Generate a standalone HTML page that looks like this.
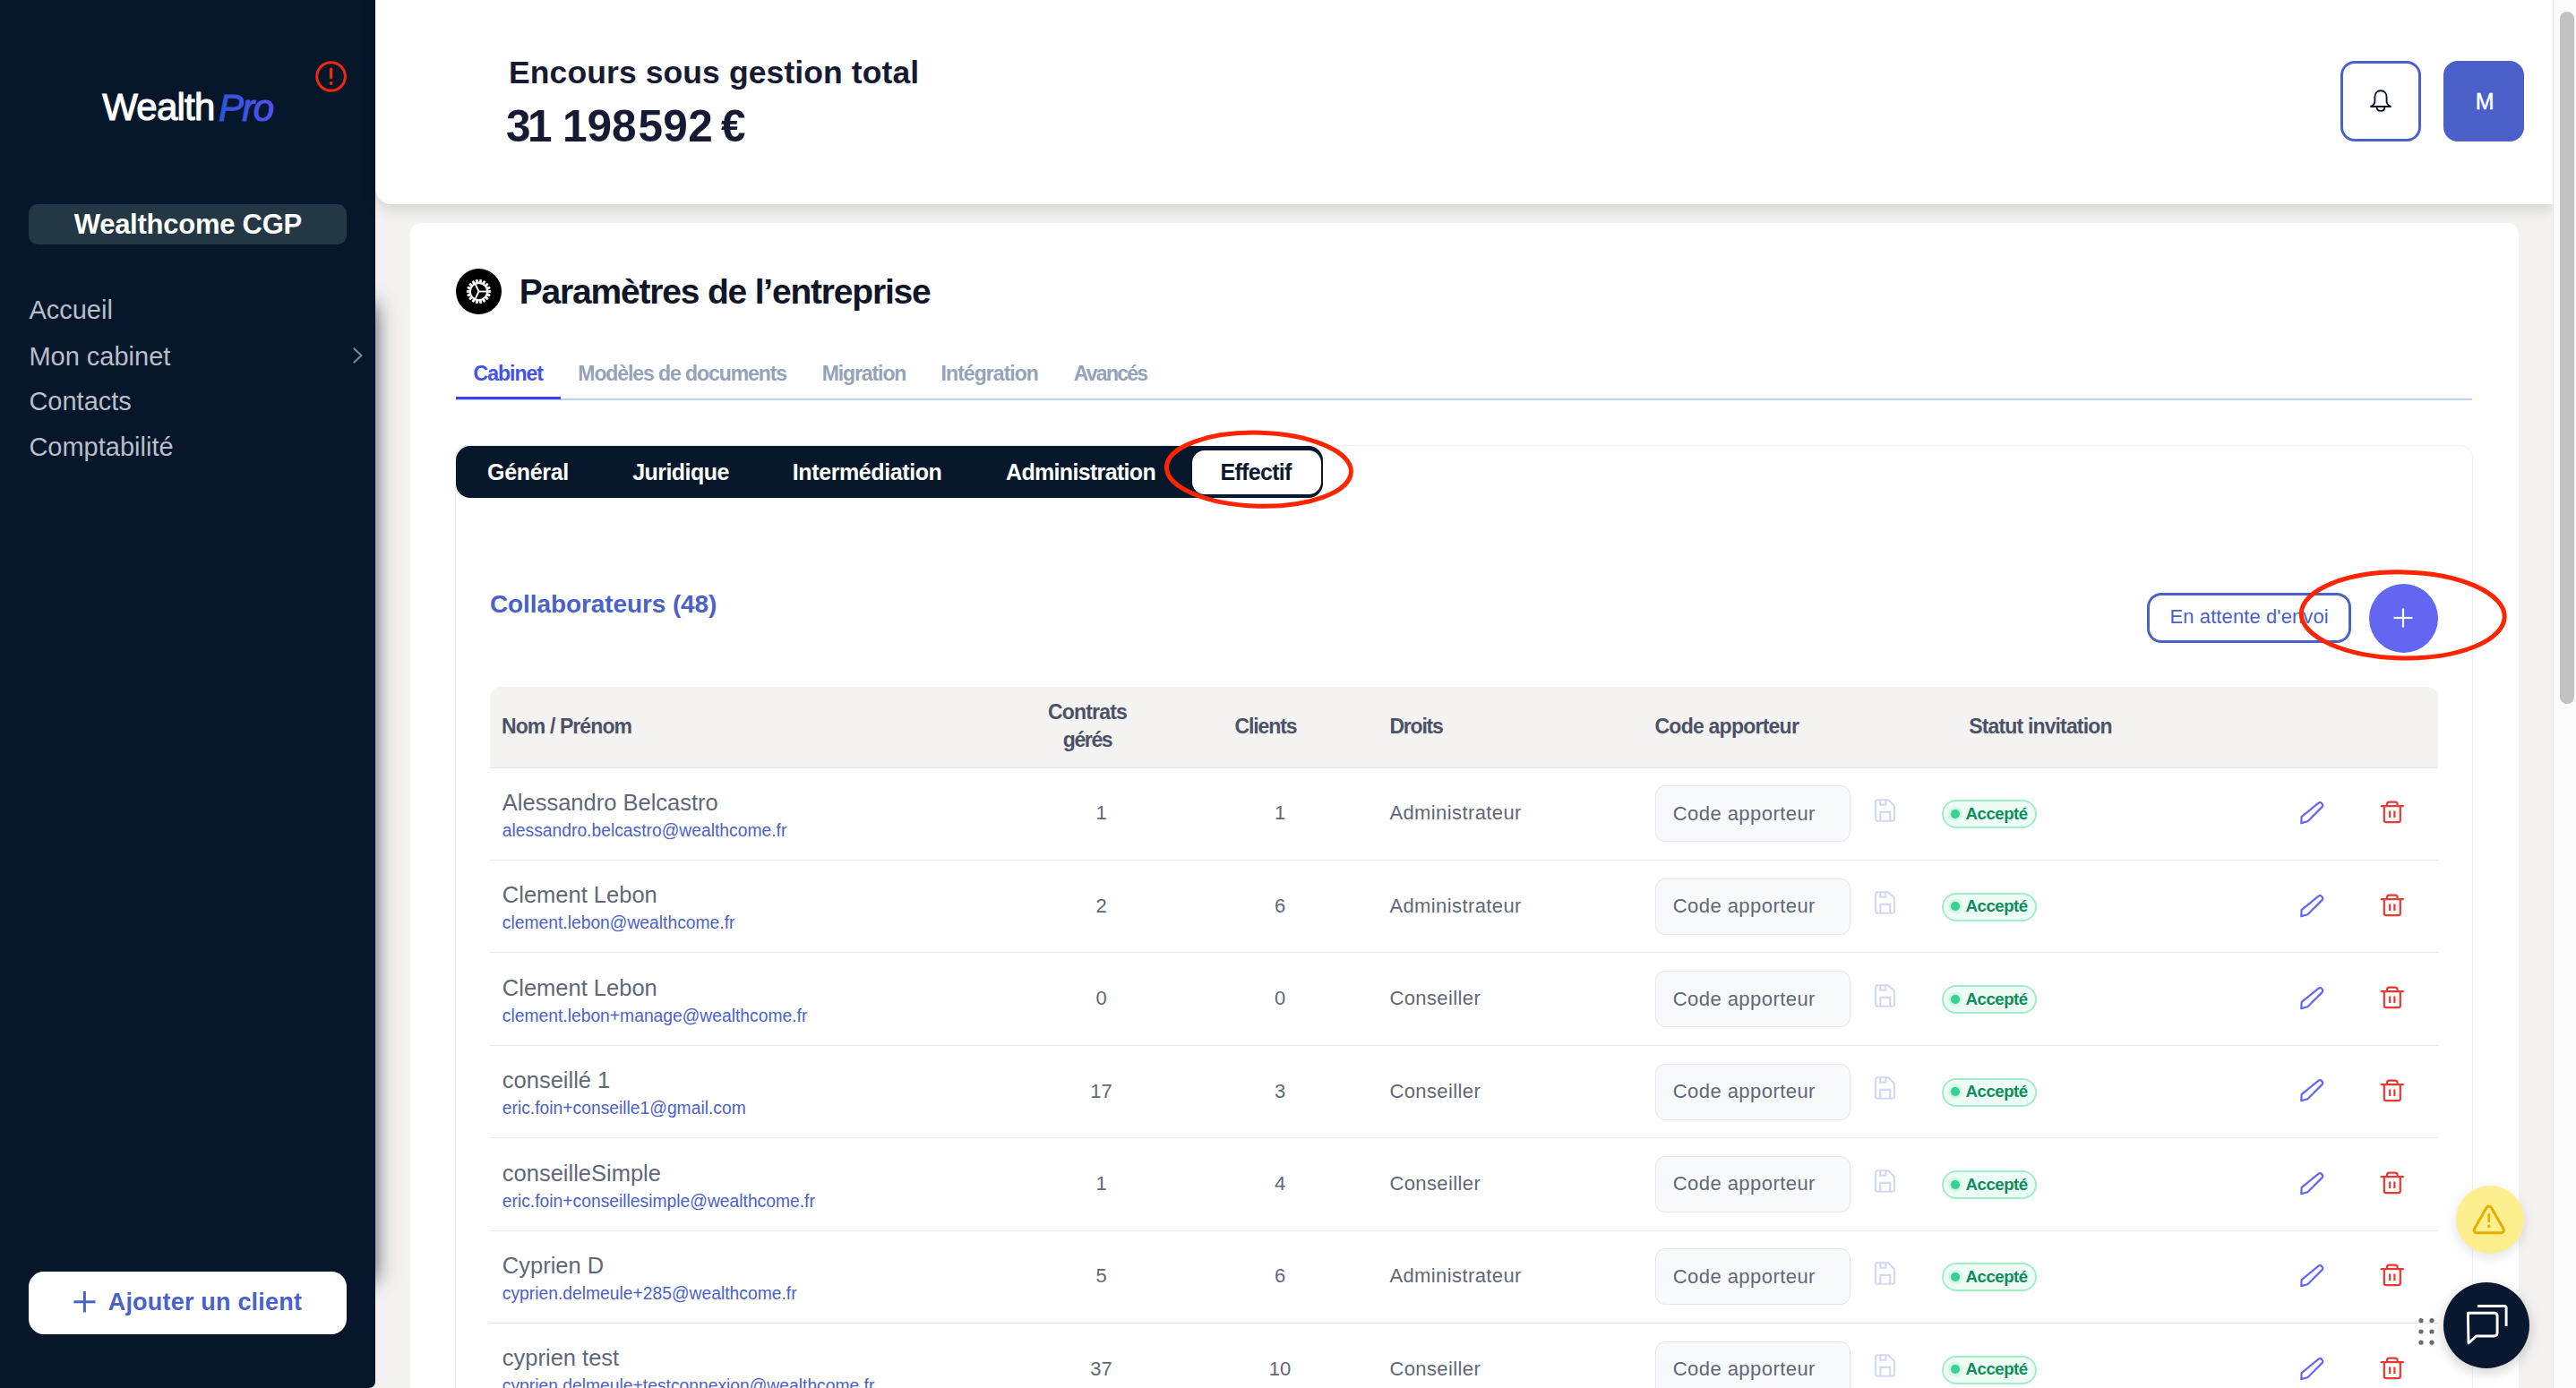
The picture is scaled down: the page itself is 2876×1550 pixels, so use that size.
<!DOCTYPE html>
<html><head><meta charset="utf-8"><title>WealthPro</title>
<style>
html,body{margin:0;padding:0;}
body{width:2876px;height:1550px;overflow:hidden;position:relative;background:#f3f2f0;font-family:"Liberation Sans",sans-serif;}
.t{position:absolute;line-height:1;white-space:nowrap;}
.r{position:absolute;}
</style></head><body>
<div class="r" style="left:0px;top:340px;width:419px;height:1090px;background:#06172b;box-shadow:0 0 22px rgba(6,23,43,0.72);z-index:2;"></div>
<div class="r" style="left:0px;top:0px;width:419px;height:1550px;background:#06172b;border-bottom-right-radius:7px;z-index:3;"></div>
<div class="t" style="left:114.2px;top:99.4px;font-size:42px;font-weight:400;color:#ffffff;letter-spacing:-0.75px;z-index:4;-webkit-text-stroke:1.1px #fff;">Wealth</div>
<svg class="r" style="left:236px;top:95px;z-index:4" width="90" height="50" viewBox="0 0 90 50"><defs><linearGradient id="pg" x1="0" x2="1" y1="0" y2="0"><stop offset="0" stop-color="#2a56d8"/><stop offset="1" stop-color="#5352f2"/></linearGradient></defs><text x="7.9" y="40" font-family="Liberation Sans" font-size="42" font-style="italic" letter-spacing="-1.6" fill="url(#pg)" stroke="url(#pg)" stroke-width="1.0">Pro</text></svg>
<svg class="r" style="left:350px;top:66px;z-index:4" width="40" height="40" viewBox="0 0 40 40"><circle cx="19.6" cy="19.5" r="15.8" fill="none" stroke="#f0290c" stroke-width="3"/><line x1="19.6" y1="11.3" x2="19.6" y2="20.8" stroke="#f0290c" stroke-width="3.4" stroke-linecap="round"/><circle cx="19.6" cy="27.0" r="2.0" fill="#f0290c"/></svg>
<div class="r" style="left:32px;top:228px;width:355px;height:45px;background:#233745;border-radius:10px;z-index:4;"></div>
<div class="t" style="left:82.7px;top:234.8px;font-size:31px;font-weight:700;color:#ffffff;letter-spacing:-0.25px;z-index:5;">Wealthcome CGP</div>
<div class="t" style="left:32.4px;top:331.6px;font-size:29px;font-weight:400;color:#b8bec8;z-index:4;">Accueil</div>
<div class="t" style="left:32.4px;top:383.6px;font-size:29px;font-weight:400;color:#b8bec8;z-index:4;">Mon cabinet</div>
<div class="t" style="left:32.4px;top:434.1px;font-size:29px;font-weight:400;color:#b8bec8;z-index:4;">Contacts</div>
<div class="t" style="left:32.4px;top:485.2px;font-size:29px;font-weight:400;color:#b8bec8;z-index:4;">Comptabilité</div>
<svg class="r" style="left:390px;top:386px;z-index:4" width="20" height="22" viewBox="0 0 20 22"><polyline points="5.5,3.5 13.5,11 5.5,18.5" fill="none" stroke="#7c8594" stroke-width="2.2" stroke-linecap="round" stroke-linejoin="round"/></svg>
<div class="r" style="left:32px;top:1420px;width:355px;height:70px;background:#ffffff;border-radius:17px;z-index:4;"></div>
<svg class="r" style="left:80px;top:1440px;z-index:5" width="28" height="28" viewBox="0 0 28 28"><line x1="14.4" y1="2" x2="14.4" y2="25.5" stroke="#4a62c8" stroke-width="3"/><line x1="2.4" y1="13.8" x2="26.5" y2="13.8" stroke="#4a62c8" stroke-width="3"/></svg>
<div class="t" style="left:120.7px;top:1440.6px;font-size:27px;font-weight:700;color:#4a62c8;letter-spacing:0.2px;z-index:5;">Ajouter un client</div>
<div class="r" style="left:419px;top:-20px;width:2431px;height:248px;background:#ffffff;border-bottom-left-radius:18px;box-shadow:0 6px 16px rgba(0,0,0,0.13);z-index:8;"></div>
<div class="t" style="left:568.0px;top:63.5px;font-size:35.5px;font-weight:700;color:#161b33;letter-spacing:0.1px;z-index:9;">Encours sous gestion total</div>
<div class="t" style="left:565.0px;top:116.1px;font-size:49.5px;font-weight:700;color:#161b33;letter-spacing:-3.5px;z-index:9;">31</div>
<div class="t" style="left:628.0px;top:116.1px;font-size:49.5px;font-weight:700;color:#161b33;z-index:9;">198</div>
<div class="t" style="left:712.5px;top:116.1px;font-size:49.5px;font-weight:700;color:#161b33;letter-spacing:0.3px;z-index:9;">592</div>
<div class="t" style="left:805.0px;top:116.1px;font-size:49.5px;font-weight:700;color:#161b33;z-index:9;">€</div>
<div class="r" style="left:2613px;top:68px;width:90px;height:90px;border:3px solid #4a62c8;border-radius:16px;box-sizing:border-box;background:#fff;z-index:9;"></div>
<svg class="r" style="left:2644px;top:98px;z-index:10" width="28" height="30" viewBox="0 0 28 30"><path d="M14 3.2c-4.2 0-6.6 3.2-6.6 7.2v5c0 2.2-1.4 3.8-4.4 5.6h22c-3-1.8-4.4-3.4-4.4-5.6v-5c0-4-2.4-7.2-6.6-7.2z" fill="none" stroke="#0b1626" stroke-width="1.9" stroke-linejoin="round"/><path d="M9.6 21.2c0 2.9 1.9 4.7 4.4 4.7s4.4-1.8 4.4-4.7" fill="none" stroke="#0b1626" stroke-width="1.9"/></svg>
<div class="r" style="left:2728px;top:68px;width:90px;height:90px;background:#4a60c8;border-radius:16px;z-index:9;"></div>
<div class="t" style="left:2763.8px;top:100.9px;font-size:25px;font-weight:400;color:#ffffff;z-index:10;-webkit-text-stroke:0.5px #fff;">M</div>
<div class="r" style="left:2850px;top:0px;width:26px;height:1550px;background:#fafafa;border-left:1px solid #e4e4e4;box-sizing:border-box;z-index:12;"></div>
<div class="r" style="left:2858px;top:13px;width:16px;height:773px;background:#c1c1c1;border-radius:8px;z-index:13;"></div>
<div class="r" style="left:458px;top:249px;width:2354px;height:1351px;background:#ffffff;border-radius:12px;z-index:1;"></div>
<svg class="r" style="left:509px;top:300px;z-index:2" width="51" height="51" viewBox="0 0 51 51"><circle cx="25.5" cy="25.5" r="25.5" fill="#000"/><g id="gear"></g><path d="M35.71,24.16 L38.76,24.48 L38.76,26.52 L35.71,26.84 L35.56,27.73 L38.31,29.08 L37.61,30.99 L34.64,30.26 L34.19,31.03 L36.31,33.24 L35.00,34.81 L32.46,33.09 L31.77,33.67 L33.01,36.47 L31.25,37.49 L29.44,35.02 L28.60,35.32 L28.81,38.38 L26.80,38.74 L25.95,35.79 L25.05,35.79 L24.20,38.74 L22.19,38.38 L22.40,35.32 L21.56,35.02 L19.75,37.49 L17.99,36.47 L19.23,33.67 L18.54,33.09 L16.00,34.81 L14.69,33.24 L16.81,31.03 L16.36,30.26 L13.39,30.99 L12.69,29.08 L15.44,27.73 L15.29,26.84 L12.24,26.52 L12.24,24.48 L15.29,24.16 L15.44,23.27 L12.69,21.92 L13.39,20.01 L16.36,20.74 L16.81,19.97 L14.69,17.76 L16.00,16.19 L18.54,17.91 L19.23,17.33 L17.99,14.53 L19.75,13.51 L21.56,15.98 L22.40,15.68 L22.19,12.62 L24.20,12.26 L25.05,15.21 L25.95,15.21 L26.80,12.26 L28.81,12.62 L28.60,15.68 L29.44,15.98 L31.25,13.51 L33.01,14.53 L31.77,17.33 L32.46,17.91 L35.00,16.19 L36.31,17.76 L34.19,19.97 L34.64,20.74 L37.61,20.01 L38.31,21.92 L35.56,23.27Z" fill="#fff" stroke="#fff" stroke-width="0.6" stroke-linejoin="round"/><circle cx="25.5" cy="25.5" r="8.6" fill="#000"/><line x1="25.5" y1="25.5" x2="34.50" y2="25.50" stroke="#fff" stroke-width="1.9"/><line x1="25.5" y1="25.5" x2="21.70" y2="33.66" stroke="#fff" stroke-width="1.9"/><line x1="25.5" y1="25.5" x2="21.70" y2="17.34" stroke="#fff" stroke-width="1.9"/></svg>
<div class="t" style="left:579.8px;top:305.5px;font-size:39px;font-weight:700;color:#0f1628;letter-spacing:-1.2px;z-index:2;">Paramètres de l’entreprise</div>
<div class="t" style="left:528.6px;top:405.5px;font-size:23px;font-weight:700;color:#4353e8;letter-spacing:-1.0px;z-index:2;">Cabinet</div>
<div class="t" style="left:645.3px;top:405.5px;font-size:23px;font-weight:700;color:#94a3b8;letter-spacing:-1.08px;z-index:2;">Modèles de documents</div>
<div class="t" style="left:917.7px;top:405.5px;font-size:23px;font-weight:700;color:#94a3b8;letter-spacing:-1.1px;z-index:2;">Migration</div>
<div class="t" style="left:1050.6px;top:405.5px;font-size:23px;font-weight:700;color:#94a3b8;letter-spacing:-0.95px;z-index:2;">Intégration</div>
<div class="t" style="left:1198.8px;top:405.5px;font-size:23px;font-weight:700;color:#94a3b8;letter-spacing:-1.75px;z-index:2;">Avancés</div>
<div class="r" style="left:509px;top:445px;width:2251px;height:2px;background:#bad2fa;z-index:2;"></div>
<div class="r" style="left:509px;top:443px;width:117px;height:3px;background:#3c42f0;z-index:3;"></div>
<div class="r" style="left:508px;top:497px;width:2253px;height:1103px;border:1px solid #efefef;border-radius:14px;box-sizing:border-box;z-index:2;"></div>
<div class="r" style="left:509px;top:498px;width:968px;height:58px;background:#07182c;border-radius:16px;z-index:3;"></div>
<div class="t" style="left:544.0px;top:514.8px;font-size:25px;font-weight:700;color:#ffffff;letter-spacing:-0.3px;z-index:4;">Général</div>
<div class="t" style="left:706.2px;top:514.8px;font-size:25px;font-weight:700;color:#ffffff;letter-spacing:-0.55px;z-index:4;">Juridique</div>
<div class="t" style="left:884.8px;top:514.8px;font-size:25px;font-weight:700;color:#ffffff;letter-spacing:-0.4px;z-index:4;">Intermédiation</div>
<div class="t" style="left:1123.0px;top:514.8px;font-size:25px;font-weight:700;color:#ffffff;letter-spacing:-0.67px;z-index:4;">Administration</div>
<div class="r" style="left:1328.6px;top:501px;width:148.4000000000001px;height:53px;background:#fff;border:2px solid #07182c;border-radius:16px;box-sizing:border-box;z-index:4;"></div>
<div class="t" style="left:1362.5px;top:514.8px;font-size:25px;font-weight:700;color:#0b1a2e;letter-spacing:-0.7px;z-index:5;">Effectif</div>
<div class="t" style="left:547.0px;top:661.1px;font-size:28px;font-weight:700;color:#4a62c8;letter-spacing:-0.1px;z-index:3;">Collaborateurs (48)</div>
<div class="r" style="left:2396.7px;top:661.6px;width:228.5px;height:56.39999999999998px;border:3px solid #4a62c8;border-radius:16px;box-sizing:border-box;z-index:3;"></div>
<div class="t" style="left:2422.5px;top:678.4px;font-size:22px;font-weight:400;color:#4a62c8;letter-spacing:0.1px;z-index:4;">En attente d&#39;envoi</div>
<div class="r" style="left:2645px;top:652px;width:77px;height:77px;background:#6366f1;border-radius:50%;z-index:3;"></div>
<svg class="r" style="left:2669px;top:676px;z-index:4" width="28" height="28" viewBox="0 0 28 28"><line x1="14" y1="3.5" x2="14" y2="24.5" stroke="#fff" stroke-width="2.2"/><line x1="3.5" y1="14" x2="24.5" y2="14" stroke="#fff" stroke-width="2.2"/></svg>
<div class="r" style="left:547px;top:767px;width:2175px;height:91px;background:#f4f3f2;border-top-left-radius:12px;border-top-right-radius:12px;border-bottom:1px solid #e3e5e9;box-sizing:border-box;z-index:3;"></div>
<div class="t" style="left:560.0px;top:799.5px;font-size:23px;font-weight:700;color:#4b5268;letter-spacing:-0.9px;z-index:4;">Nom / Prénom</div>
<div class="t" style="left:1214.0px;top:783.5px;font-size:23px;font-weight:700;color:#4b5268;transform:translateX(-50%);letter-spacing:-0.8px;z-index:4;">Contrats</div>
<div class="t" style="left:1214.0px;top:814.9px;font-size:23px;font-weight:700;color:#4b5268;transform:translateX(-50%);letter-spacing:-1.4px;z-index:4;">gérés</div>
<div class="t" style="left:1378.5px;top:799.9px;font-size:23px;font-weight:700;color:#4b5268;letter-spacing:-1.1px;z-index:4;">Clients</div>
<div class="t" style="left:1551.4px;top:799.9px;font-size:23px;font-weight:700;color:#4b5268;letter-spacing:-1.2px;z-index:4;">Droits</div>
<div class="t" style="left:1847.5px;top:799.9px;font-size:23px;font-weight:700;color:#4b5268;letter-spacing:-0.76px;z-index:4;">Code apporteur</div>
<div class="t" style="left:2198.3px;top:799.9px;font-size:23px;font-weight:700;color:#4b5268;letter-spacing:-0.85px;z-index:4;">Statut invitation</div>
<div class="t" style="left:560.8px;top:884.0px;font-size:25.5px;font-weight:400;color:#5f6877;z-index:4;">Alessandro Belcastro</div>
<div class="t" style="left:560.8px;top:917.9px;font-size:19.3px;font-weight:400;color:#4a62c8;z-index:4;">alessandro.belcastro@wealthcome.fr</div>
<div class="t" style="left:1229.6px;top:897.4px;font-size:22px;font-weight:400;color:#5f6877;transform:translateX(-50%);z-index:4;">1</div>
<div class="t" style="left:1429.0px;top:897.4px;font-size:22px;font-weight:400;color:#5f6877;transform:translateX(-50%);z-index:4;">1</div>
<div class="t" style="left:1551.4px;top:897.4px;font-size:22px;font-weight:400;color:#5f6877;letter-spacing:0.4px;z-index:4;">Administrateur</div>
<div class="r" style="left:1847.5px;top:877.3px;width:218.0px;height:63.10000000000002px;background:#f8f9fb;border:1px solid #e3e5ea;border-radius:11px;box-sizing:border-box;z-index:4;"></div>
<div class="t" style="left:1867.7px;top:897.8px;font-size:22px;font-weight:400;color:#5f6877;letter-spacing:0.45px;z-index:5;">Code apporteur</div>
<svg class="r" style="left:2091px;top:890.0px;z-index:4" width="28" height="30" viewBox="0 0 28 30"><path d="M5 3.3h12.2l6.8 6.8v14.6a2 2 0 0 1-2 2H5a2 2 0 0 1-2-2V5.3a2 2 0 0 1 2-2z" fill="none" stroke="#d3d7f3" stroke-width="2.1" stroke-linejoin="round"/><path d="M8.3 3.5v5.3h6v-5.3" fill="none" stroke="#d3d7f3" stroke-width="2.1"/><path d="M8.3 26.5v-9.6h10.9v9.6" fill="none" stroke="#d3d7f3" stroke-width="2.1"/></svg>
<div class="r" style="left:2168.3px;top:893.3px;width:106.09999999999991px;height:32.0px;background:#edfcf4;border:2px solid #a0eec6;border-radius:16px;box-sizing:border-box;z-index:4;"></div>
<div class="r" style="left:2177.5px;top:904.0px;width:10.0px;height:10.0px;background:#3acf93;border-radius:50%;box-shadow:0 0 4px 1px rgba(58,207,147,.45);z-index:5;"></div>
<div class="t" style="left:2194.5px;top:900.0px;font-size:18.7px;font-weight:700;color:#0f8d5c;letter-spacing:-0.5px;z-index:5;">Accepté</div>
<svg class="r" style="left:2566px;top:893.2px;z-index:4" width="30" height="30" viewBox="0 0 30 30"><path d="M22.3 3.9a3 3 0 0 1 4.2 4.2L10.4 24.2 3.3 26.1l0.3-6.9z" fill="none" stroke="#6366f1" stroke-width="2.2" stroke-linejoin="round"/></svg>
<svg class="r" style="left:2656px;top:893.3px;z-index:4" width="30" height="30" viewBox="0 0 30 30"><path d="M2.6 7.2h24.3" stroke="#e53935" stroke-width="2.2" stroke-linecap="round"/><path d="M9 6.8V5.2a2.6 2.6 0 0 1 2.6-2.6h6.4a2.6 2.6 0 0 1 2.6 2.6v1.6" fill="none" stroke="#e53935" stroke-width="2.2"/><path d="M5.8 7.4v15.6a2.2 2.2 0 0 0 2.2 2.2h13.6a2.2 2.2 0 0 0 2.2-2.2V7.4" fill="none" stroke="#e53935" stroke-width="2.2"/><path d="M12.2 12.5v7.5M17.4 12.5v7.5" stroke="#e53935" stroke-width="2.2"/></svg>
<div class="r" style="left:547px;top:959.9px;width:2175px;height:1.0px;background:#e6e7ee;z-index:4;"></div>
<div class="t" style="left:560.8px;top:987.4px;font-size:25.5px;font-weight:400;color:#5f6877;z-index:4;">Clement Lebon</div>
<div class="t" style="left:560.8px;top:1021.3px;font-size:19.3px;font-weight:400;color:#4a62c8;z-index:4;">clement.lebon@wealthcome.fr</div>
<div class="t" style="left:1229.6px;top:1000.8px;font-size:22px;font-weight:400;color:#5f6877;transform:translateX(-50%);z-index:4;">2</div>
<div class="t" style="left:1429.0px;top:1000.8px;font-size:22px;font-weight:400;color:#5f6877;transform:translateX(-50%);z-index:4;">6</div>
<div class="t" style="left:1551.4px;top:1000.8px;font-size:22px;font-weight:400;color:#5f6877;letter-spacing:0.4px;z-index:4;">Administrateur</div>
<div class="r" style="left:1847.5px;top:980.7px;width:218.0px;height:63.09999999999991px;background:#f8f9fb;border:1px solid #e3e5ea;border-radius:11px;box-sizing:border-box;z-index:4;"></div>
<div class="t" style="left:1867.7px;top:1001.2px;font-size:22px;font-weight:400;color:#5f6877;letter-spacing:0.45px;z-index:5;">Code apporteur</div>
<svg class="r" style="left:2091px;top:993.4px;z-index:4" width="28" height="30" viewBox="0 0 28 30"><path d="M5 3.3h12.2l6.8 6.8v14.6a2 2 0 0 1-2 2H5a2 2 0 0 1-2-2V5.3a2 2 0 0 1 2-2z" fill="none" stroke="#d3d7f3" stroke-width="2.1" stroke-linejoin="round"/><path d="M8.3 3.5v5.3h6v-5.3" fill="none" stroke="#d3d7f3" stroke-width="2.1"/><path d="M8.3 26.5v-9.6h10.9v9.6" fill="none" stroke="#d3d7f3" stroke-width="2.1"/></svg>
<div class="r" style="left:2168.3px;top:996.7px;width:106.09999999999991px;height:32.0px;background:#edfcf4;border:2px solid #a0eec6;border-radius:16px;box-sizing:border-box;z-index:4;"></div>
<div class="r" style="left:2177.5px;top:1007.4px;width:10.0px;height:10.0px;background:#3acf93;border-radius:50%;box-shadow:0 0 4px 1px rgba(58,207,147,.45);z-index:5;"></div>
<div class="t" style="left:2194.5px;top:1003.4px;font-size:18.7px;font-weight:700;color:#0f8d5c;letter-spacing:-0.5px;z-index:5;">Accepté</div>
<svg class="r" style="left:2566px;top:996.6px;z-index:4" width="30" height="30" viewBox="0 0 30 30"><path d="M22.3 3.9a3 3 0 0 1 4.2 4.2L10.4 24.2 3.3 26.1l0.3-6.9z" fill="none" stroke="#6366f1" stroke-width="2.2" stroke-linejoin="round"/></svg>
<svg class="r" style="left:2656px;top:996.7px;z-index:4" width="30" height="30" viewBox="0 0 30 30"><path d="M2.6 7.2h24.3" stroke="#e53935" stroke-width="2.2" stroke-linecap="round"/><path d="M9 6.8V5.2a2.6 2.6 0 0 1 2.6-2.6h6.4a2.6 2.6 0 0 1 2.6 2.6v1.6" fill="none" stroke="#e53935" stroke-width="2.2"/><path d="M5.8 7.4v15.6a2.2 2.2 0 0 0 2.2 2.2h13.6a2.2 2.2 0 0 0 2.2-2.2V7.4" fill="none" stroke="#e53935" stroke-width="2.2"/><path d="M12.2 12.5v7.5M17.4 12.5v7.5" stroke="#e53935" stroke-width="2.2"/></svg>
<div class="r" style="left:547px;top:1063.3px;width:2175px;height:1.0px;background:#e6e7ee;z-index:4;"></div>
<div class="t" style="left:560.8px;top:1090.8px;font-size:25.5px;font-weight:400;color:#5f6877;z-index:4;">Clement Lebon</div>
<div class="t" style="left:560.8px;top:1124.7px;font-size:19.3px;font-weight:400;color:#4a62c8;z-index:4;">clement.lebon+manage@wealthcome.fr</div>
<div class="t" style="left:1229.6px;top:1104.2px;font-size:22px;font-weight:400;color:#5f6877;transform:translateX(-50%);z-index:4;">0</div>
<div class="t" style="left:1429.0px;top:1104.2px;font-size:22px;font-weight:400;color:#5f6877;transform:translateX(-50%);z-index:4;">0</div>
<div class="t" style="left:1551.4px;top:1104.2px;font-size:22px;font-weight:400;color:#5f6877;letter-spacing:0.4px;z-index:4;">Conseiller</div>
<div class="r" style="left:1847.5px;top:1084.1px;width:218.0px;height:63.100000000000136px;background:#f8f9fb;border:1px solid #e3e5ea;border-radius:11px;box-sizing:border-box;z-index:4;"></div>
<div class="t" style="left:1867.7px;top:1104.6px;font-size:22px;font-weight:400;color:#5f6877;letter-spacing:0.45px;z-index:5;">Code apporteur</div>
<svg class="r" style="left:2091px;top:1096.8px;z-index:4" width="28" height="30" viewBox="0 0 28 30"><path d="M5 3.3h12.2l6.8 6.8v14.6a2 2 0 0 1-2 2H5a2 2 0 0 1-2-2V5.3a2 2 0 0 1 2-2z" fill="none" stroke="#d3d7f3" stroke-width="2.1" stroke-linejoin="round"/><path d="M8.3 3.5v5.3h6v-5.3" fill="none" stroke="#d3d7f3" stroke-width="2.1"/><path d="M8.3 26.5v-9.6h10.9v9.6" fill="none" stroke="#d3d7f3" stroke-width="2.1"/></svg>
<div class="r" style="left:2168.3px;top:1100.1px;width:106.09999999999991px;height:32.0px;background:#edfcf4;border:2px solid #a0eec6;border-radius:16px;box-sizing:border-box;z-index:4;"></div>
<div class="r" style="left:2177.5px;top:1110.8px;width:10.0px;height:10.0px;background:#3acf93;border-radius:50%;box-shadow:0 0 4px 1px rgba(58,207,147,.45);z-index:5;"></div>
<div class="t" style="left:2194.5px;top:1106.8px;font-size:18.7px;font-weight:700;color:#0f8d5c;letter-spacing:-0.5px;z-index:5;">Accepté</div>
<svg class="r" style="left:2566px;top:1100.0px;z-index:4" width="30" height="30" viewBox="0 0 30 30"><path d="M22.3 3.9a3 3 0 0 1 4.2 4.2L10.4 24.2 3.3 26.1l0.3-6.9z" fill="none" stroke="#6366f1" stroke-width="2.2" stroke-linejoin="round"/></svg>
<svg class="r" style="left:2656px;top:1100.1px;z-index:4" width="30" height="30" viewBox="0 0 30 30"><path d="M2.6 7.2h24.3" stroke="#e53935" stroke-width="2.2" stroke-linecap="round"/><path d="M9 6.8V5.2a2.6 2.6 0 0 1 2.6-2.6h6.4a2.6 2.6 0 0 1 2.6 2.6v1.6" fill="none" stroke="#e53935" stroke-width="2.2"/><path d="M5.8 7.4v15.6a2.2 2.2 0 0 0 2.2 2.2h13.6a2.2 2.2 0 0 0 2.2-2.2V7.4" fill="none" stroke="#e53935" stroke-width="2.2"/><path d="M12.2 12.5v7.5M17.4 12.5v7.5" stroke="#e53935" stroke-width="2.2"/></svg>
<div class="r" style="left:547px;top:1166.7px;width:2175px;height:1.0px;background:#e6e7ee;z-index:4;"></div>
<div class="t" style="left:560.8px;top:1194.2px;font-size:25.5px;font-weight:400;color:#5f6877;z-index:4;">conseillé 1</div>
<div class="t" style="left:560.8px;top:1228.1px;font-size:19.3px;font-weight:400;color:#4a62c8;z-index:4;">eric.foin+conseille1@gmail.com</div>
<div class="t" style="left:1229.6px;top:1207.6px;font-size:22px;font-weight:400;color:#5f6877;transform:translateX(-50%);z-index:4;">17</div>
<div class="t" style="left:1429.0px;top:1207.6px;font-size:22px;font-weight:400;color:#5f6877;transform:translateX(-50%);z-index:4;">3</div>
<div class="t" style="left:1551.4px;top:1207.6px;font-size:22px;font-weight:400;color:#5f6877;letter-spacing:0.4px;z-index:4;">Conseiller</div>
<div class="r" style="left:1847.5px;top:1187.5px;width:218.0px;height:63.09999999999991px;background:#f8f9fb;border:1px solid #e3e5ea;border-radius:11px;box-sizing:border-box;z-index:4;"></div>
<div class="t" style="left:1867.7px;top:1208.0px;font-size:22px;font-weight:400;color:#5f6877;letter-spacing:0.45px;z-index:5;">Code apporteur</div>
<svg class="r" style="left:2091px;top:1200.2px;z-index:4" width="28" height="30" viewBox="0 0 28 30"><path d="M5 3.3h12.2l6.8 6.8v14.6a2 2 0 0 1-2 2H5a2 2 0 0 1-2-2V5.3a2 2 0 0 1 2-2z" fill="none" stroke="#d3d7f3" stroke-width="2.1" stroke-linejoin="round"/><path d="M8.3 3.5v5.3h6v-5.3" fill="none" stroke="#d3d7f3" stroke-width="2.1"/><path d="M8.3 26.5v-9.6h10.9v9.6" fill="none" stroke="#d3d7f3" stroke-width="2.1"/></svg>
<div class="r" style="left:2168.3px;top:1203.5px;width:106.09999999999991px;height:32.0px;background:#edfcf4;border:2px solid #a0eec6;border-radius:16px;box-sizing:border-box;z-index:4;"></div>
<div class="r" style="left:2177.5px;top:1214.2px;width:10.0px;height:10.0px;background:#3acf93;border-radius:50%;box-shadow:0 0 4px 1px rgba(58,207,147,.45);z-index:5;"></div>
<div class="t" style="left:2194.5px;top:1210.2px;font-size:18.7px;font-weight:700;color:#0f8d5c;letter-spacing:-0.5px;z-index:5;">Accepté</div>
<svg class="r" style="left:2566px;top:1203.4px;z-index:4" width="30" height="30" viewBox="0 0 30 30"><path d="M22.3 3.9a3 3 0 0 1 4.2 4.2L10.4 24.2 3.3 26.1l0.3-6.9z" fill="none" stroke="#6366f1" stroke-width="2.2" stroke-linejoin="round"/></svg>
<svg class="r" style="left:2656px;top:1203.5px;z-index:4" width="30" height="30" viewBox="0 0 30 30"><path d="M2.6 7.2h24.3" stroke="#e53935" stroke-width="2.2" stroke-linecap="round"/><path d="M9 6.8V5.2a2.6 2.6 0 0 1 2.6-2.6h6.4a2.6 2.6 0 0 1 2.6 2.6v1.6" fill="none" stroke="#e53935" stroke-width="2.2"/><path d="M5.8 7.4v15.6a2.2 2.2 0 0 0 2.2 2.2h13.6a2.2 2.2 0 0 0 2.2-2.2V7.4" fill="none" stroke="#e53935" stroke-width="2.2"/><path d="M12.2 12.5v7.5M17.4 12.5v7.5" stroke="#e53935" stroke-width="2.2"/></svg>
<div class="r" style="left:547px;top:1270.1px;width:2175px;height:1.0px;background:#e6e7ee;z-index:4;"></div>
<div class="t" style="left:560.8px;top:1297.6px;font-size:25.5px;font-weight:400;color:#5f6877;z-index:4;">conseilleSimple</div>
<div class="t" style="left:560.8px;top:1331.5px;font-size:19.3px;font-weight:400;color:#4a62c8;z-index:4;">eric.foin+conseillesimple@wealthcome.fr</div>
<div class="t" style="left:1229.6px;top:1311.0px;font-size:22px;font-weight:400;color:#5f6877;transform:translateX(-50%);z-index:4;">1</div>
<div class="t" style="left:1429.0px;top:1311.0px;font-size:22px;font-weight:400;color:#5f6877;transform:translateX(-50%);z-index:4;">4</div>
<div class="t" style="left:1551.4px;top:1311.0px;font-size:22px;font-weight:400;color:#5f6877;letter-spacing:0.4px;z-index:4;">Conseiller</div>
<div class="r" style="left:1847.5px;top:1290.9px;width:218.0px;height:63.09999999999991px;background:#f8f9fb;border:1px solid #e3e5ea;border-radius:11px;box-sizing:border-box;z-index:4;"></div>
<div class="t" style="left:1867.7px;top:1311.4px;font-size:22px;font-weight:400;color:#5f6877;letter-spacing:0.45px;z-index:5;">Code apporteur</div>
<svg class="r" style="left:2091px;top:1303.6px;z-index:4" width="28" height="30" viewBox="0 0 28 30"><path d="M5 3.3h12.2l6.8 6.8v14.6a2 2 0 0 1-2 2H5a2 2 0 0 1-2-2V5.3a2 2 0 0 1 2-2z" fill="none" stroke="#d3d7f3" stroke-width="2.1" stroke-linejoin="round"/><path d="M8.3 3.5v5.3h6v-5.3" fill="none" stroke="#d3d7f3" stroke-width="2.1"/><path d="M8.3 26.5v-9.6h10.9v9.6" fill="none" stroke="#d3d7f3" stroke-width="2.1"/></svg>
<div class="r" style="left:2168.3px;top:1306.9px;width:106.09999999999991px;height:32.0px;background:#edfcf4;border:2px solid #a0eec6;border-radius:16px;box-sizing:border-box;z-index:4;"></div>
<div class="r" style="left:2177.5px;top:1317.6px;width:10.0px;height:10.0px;background:#3acf93;border-radius:50%;box-shadow:0 0 4px 1px rgba(58,207,147,.45);z-index:5;"></div>
<div class="t" style="left:2194.5px;top:1313.6px;font-size:18.7px;font-weight:700;color:#0f8d5c;letter-spacing:-0.5px;z-index:5;">Accepté</div>
<svg class="r" style="left:2566px;top:1306.8px;z-index:4" width="30" height="30" viewBox="0 0 30 30"><path d="M22.3 3.9a3 3 0 0 1 4.2 4.2L10.4 24.2 3.3 26.1l0.3-6.9z" fill="none" stroke="#6366f1" stroke-width="2.2" stroke-linejoin="round"/></svg>
<svg class="r" style="left:2656px;top:1306.9px;z-index:4" width="30" height="30" viewBox="0 0 30 30"><path d="M2.6 7.2h24.3" stroke="#e53935" stroke-width="2.2" stroke-linecap="round"/><path d="M9 6.8V5.2a2.6 2.6 0 0 1 2.6-2.6h6.4a2.6 2.6 0 0 1 2.6 2.6v1.6" fill="none" stroke="#e53935" stroke-width="2.2"/><path d="M5.8 7.4v15.6a2.2 2.2 0 0 0 2.2 2.2h13.6a2.2 2.2 0 0 0 2.2-2.2V7.4" fill="none" stroke="#e53935" stroke-width="2.2"/><path d="M12.2 12.5v7.5M17.4 12.5v7.5" stroke="#e53935" stroke-width="2.2"/></svg>
<div class="r" style="left:547px;top:1373.5px;width:2175px;height:1.0px;background:#e6e7ee;z-index:4;"></div>
<div class="t" style="left:560.8px;top:1401.0px;font-size:25.5px;font-weight:400;color:#5f6877;z-index:4;">Cyprien D</div>
<div class="t" style="left:560.8px;top:1434.9px;font-size:19.3px;font-weight:400;color:#4a62c8;z-index:4;">cyprien.delmeule+285@wealthcome.fr</div>
<div class="t" style="left:1229.6px;top:1414.4px;font-size:22px;font-weight:400;color:#5f6877;transform:translateX(-50%);z-index:4;">5</div>
<div class="t" style="left:1429.0px;top:1414.4px;font-size:22px;font-weight:400;color:#5f6877;transform:translateX(-50%);z-index:4;">6</div>
<div class="t" style="left:1551.4px;top:1414.4px;font-size:22px;font-weight:400;color:#5f6877;letter-spacing:0.4px;z-index:4;">Administrateur</div>
<div class="r" style="left:1847.5px;top:1394.3px;width:218.0px;height:63.100000000000136px;background:#f8f9fb;border:1px solid #e3e5ea;border-radius:11px;box-sizing:border-box;z-index:4;"></div>
<div class="t" style="left:1867.7px;top:1414.8px;font-size:22px;font-weight:400;color:#5f6877;letter-spacing:0.45px;z-index:5;">Code apporteur</div>
<svg class="r" style="left:2091px;top:1407.0px;z-index:4" width="28" height="30" viewBox="0 0 28 30"><path d="M5 3.3h12.2l6.8 6.8v14.6a2 2 0 0 1-2 2H5a2 2 0 0 1-2-2V5.3a2 2 0 0 1 2-2z" fill="none" stroke="#d3d7f3" stroke-width="2.1" stroke-linejoin="round"/><path d="M8.3 3.5v5.3h6v-5.3" fill="none" stroke="#d3d7f3" stroke-width="2.1"/><path d="M8.3 26.5v-9.6h10.9v9.6" fill="none" stroke="#d3d7f3" stroke-width="2.1"/></svg>
<div class="r" style="left:2168.3px;top:1410.3px;width:106.09999999999991px;height:32.0px;background:#edfcf4;border:2px solid #a0eec6;border-radius:16px;box-sizing:border-box;z-index:4;"></div>
<div class="r" style="left:2177.5px;top:1421.0px;width:10.0px;height:10.0px;background:#3acf93;border-radius:50%;box-shadow:0 0 4px 1px rgba(58,207,147,.45);z-index:5;"></div>
<div class="t" style="left:2194.5px;top:1417.0px;font-size:18.7px;font-weight:700;color:#0f8d5c;letter-spacing:-0.5px;z-index:5;">Accepté</div>
<svg class="r" style="left:2566px;top:1410.2px;z-index:4" width="30" height="30" viewBox="0 0 30 30"><path d="M22.3 3.9a3 3 0 0 1 4.2 4.2L10.4 24.2 3.3 26.1l0.3-6.9z" fill="none" stroke="#6366f1" stroke-width="2.2" stroke-linejoin="round"/></svg>
<svg class="r" style="left:2656px;top:1410.3px;z-index:4" width="30" height="30" viewBox="0 0 30 30"><path d="M2.6 7.2h24.3" stroke="#e53935" stroke-width="2.2" stroke-linecap="round"/><path d="M9 6.8V5.2a2.6 2.6 0 0 1 2.6-2.6h6.4a2.6 2.6 0 0 1 2.6 2.6v1.6" fill="none" stroke="#e53935" stroke-width="2.2"/><path d="M5.8 7.4v15.6a2.2 2.2 0 0 0 2.2 2.2h13.6a2.2 2.2 0 0 0 2.2-2.2V7.4" fill="none" stroke="#e53935" stroke-width="2.2"/><path d="M12.2 12.5v7.5M17.4 12.5v7.5" stroke="#e53935" stroke-width="2.2"/></svg>
<div class="r" style="left:547px;top:1476.9px;width:2175px;height:1.0px;background:#e6e7ee;z-index:4;"></div>
<div class="t" style="left:560.8px;top:1504.4px;font-size:25.5px;font-weight:400;color:#5f6877;z-index:4;">cyprien test</div>
<div class="t" style="left:560.8px;top:1538.3px;font-size:19.3px;font-weight:400;color:#4a62c8;z-index:4;">cyprien.delmeule+testconnexion@wealthcome.fr</div>
<div class="t" style="left:1229.6px;top:1517.8px;font-size:22px;font-weight:400;color:#5f6877;transform:translateX(-50%);z-index:4;">37</div>
<div class="t" style="left:1429.0px;top:1517.8px;font-size:22px;font-weight:400;color:#5f6877;transform:translateX(-50%);z-index:4;">10</div>
<div class="t" style="left:1551.4px;top:1517.8px;font-size:22px;font-weight:400;color:#5f6877;letter-spacing:0.4px;z-index:4;">Conseiller</div>
<div class="r" style="left:1847.5px;top:1497.7px;width:218.0px;height:63.09999999999991px;background:#f8f9fb;border:1px solid #e3e5ea;border-radius:11px;box-sizing:border-box;z-index:4;"></div>
<div class="t" style="left:1867.7px;top:1518.2px;font-size:22px;font-weight:400;color:#5f6877;letter-spacing:0.45px;z-index:5;">Code apporteur</div>
<svg class="r" style="left:2091px;top:1510.4px;z-index:4" width="28" height="30" viewBox="0 0 28 30"><path d="M5 3.3h12.2l6.8 6.8v14.6a2 2 0 0 1-2 2H5a2 2 0 0 1-2-2V5.3a2 2 0 0 1 2-2z" fill="none" stroke="#d3d7f3" stroke-width="2.1" stroke-linejoin="round"/><path d="M8.3 3.5v5.3h6v-5.3" fill="none" stroke="#d3d7f3" stroke-width="2.1"/><path d="M8.3 26.5v-9.6h10.9v9.6" fill="none" stroke="#d3d7f3" stroke-width="2.1"/></svg>
<div class="r" style="left:2168.3px;top:1513.7px;width:106.09999999999991px;height:32.0px;background:#edfcf4;border:2px solid #a0eec6;border-radius:16px;box-sizing:border-box;z-index:4;"></div>
<div class="r" style="left:2177.5px;top:1524.4px;width:10.0px;height:10.0px;background:#3acf93;border-radius:50%;box-shadow:0 0 4px 1px rgba(58,207,147,.45);z-index:5;"></div>
<div class="t" style="left:2194.5px;top:1520.4px;font-size:18.7px;font-weight:700;color:#0f8d5c;letter-spacing:-0.5px;z-index:5;">Accepté</div>
<svg class="r" style="left:2566px;top:1513.6px;z-index:4" width="30" height="30" viewBox="0 0 30 30"><path d="M22.3 3.9a3 3 0 0 1 4.2 4.2L10.4 24.2 3.3 26.1l0.3-6.9z" fill="none" stroke="#6366f1" stroke-width="2.2" stroke-linejoin="round"/></svg>
<svg class="r" style="left:2656px;top:1513.7px;z-index:4" width="30" height="30" viewBox="0 0 30 30"><path d="M2.6 7.2h24.3" stroke="#e53935" stroke-width="2.2" stroke-linecap="round"/><path d="M9 6.8V5.2a2.6 2.6 0 0 1 2.6-2.6h6.4a2.6 2.6 0 0 1 2.6 2.6v1.6" fill="none" stroke="#e53935" stroke-width="2.2"/><path d="M5.8 7.4v15.6a2.2 2.2 0 0 0 2.2 2.2h13.6a2.2 2.2 0 0 0 2.2-2.2V7.4" fill="none" stroke="#e53935" stroke-width="2.2"/><path d="M12.2 12.5v7.5M17.4 12.5v7.5" stroke="#e53935" stroke-width="2.2"/></svg>
<svg class="r" style="left:0;top:0;z-index:20" width="2876" height="1550"><ellipse cx="1405.4" cy="524.2" rx="103" ry="41" fill="none" stroke="#ff2400" stroke-width="5" transform="rotate(1.5 1405 524)"/><ellipse cx="2682.7" cy="686.9" rx="113.5" ry="48" fill="none" stroke="#ff2400" stroke-width="5" transform="rotate(1 2682 687)"/></svg>
<div class="r" style="left:2741.5px;top:1324px;width:76.0px;height:76px;background:#fdef8e;border-radius:50%;box-shadow:0 4px 14px rgba(0,0,0,0.12);z-index:10;"></div>
<svg class="r" style="left:2759px;top:1344px;z-index:11" width="40" height="36" viewBox="0 0 40 36"><path d="M17.2 4.6a3 3 0 0 1 5.2 0l13.6 23.6a3 3 0 0 1-2.6 4.5H6.2a3 3 0 0 1-2.6-4.5z" fill="none" stroke="#e6ae00" stroke-width="3" stroke-linejoin="round"/><line x1="19.8" y1="12.5" x2="19.8" y2="20" stroke="#e6ae00" stroke-width="2.8" stroke-linecap="round"/><circle cx="19.8" cy="25.2" r="1.7" fill="#e6ae00"/></svg>
<div class="r" style="left:2728px;top:1432px;width:96px;height:96px;background:#071830;border-radius:50%;box-shadow:0 4px 16px rgba(0,0,0,0.2);z-index:10;"></div>
<svg class="r" style="left:2740px;top:1450px;z-index:11" width="70" height="60" viewBox="0 0 70 60"><path d="M26 8.5h30.5a1.6 1.6 0 0 1 1.6 1.6v21" fill="none" stroke="#fff" stroke-width="2.9"/><path d="M15.4 16.2h29.5a3.2 3.2 0 0 1 3.2 3.2v19.4a3.2 3.2 0 0 1-3.2 3.2H24.6l-8.6 8z" fill="none" stroke="#fff" stroke-width="2.9" stroke-linejoin="round"/></svg>
<svg class="r" style="left:0;top:0;z-index:9" width="2876" height="1550"><circle cx="2703" cy="1474.7" r="2.6" fill="#6b6b6b"/><circle cx="2703" cy="1487" r="2.6" fill="#6b6b6b"/><circle cx="2703" cy="1499.2" r="2.6" fill="#6b6b6b"/><circle cx="2715" cy="1474.7" r="2.6" fill="#6b6b6b"/><circle cx="2715" cy="1487" r="2.6" fill="#6b6b6b"/><circle cx="2715" cy="1499.2" r="2.6" fill="#6b6b6b"/></svg>
</body></html>
